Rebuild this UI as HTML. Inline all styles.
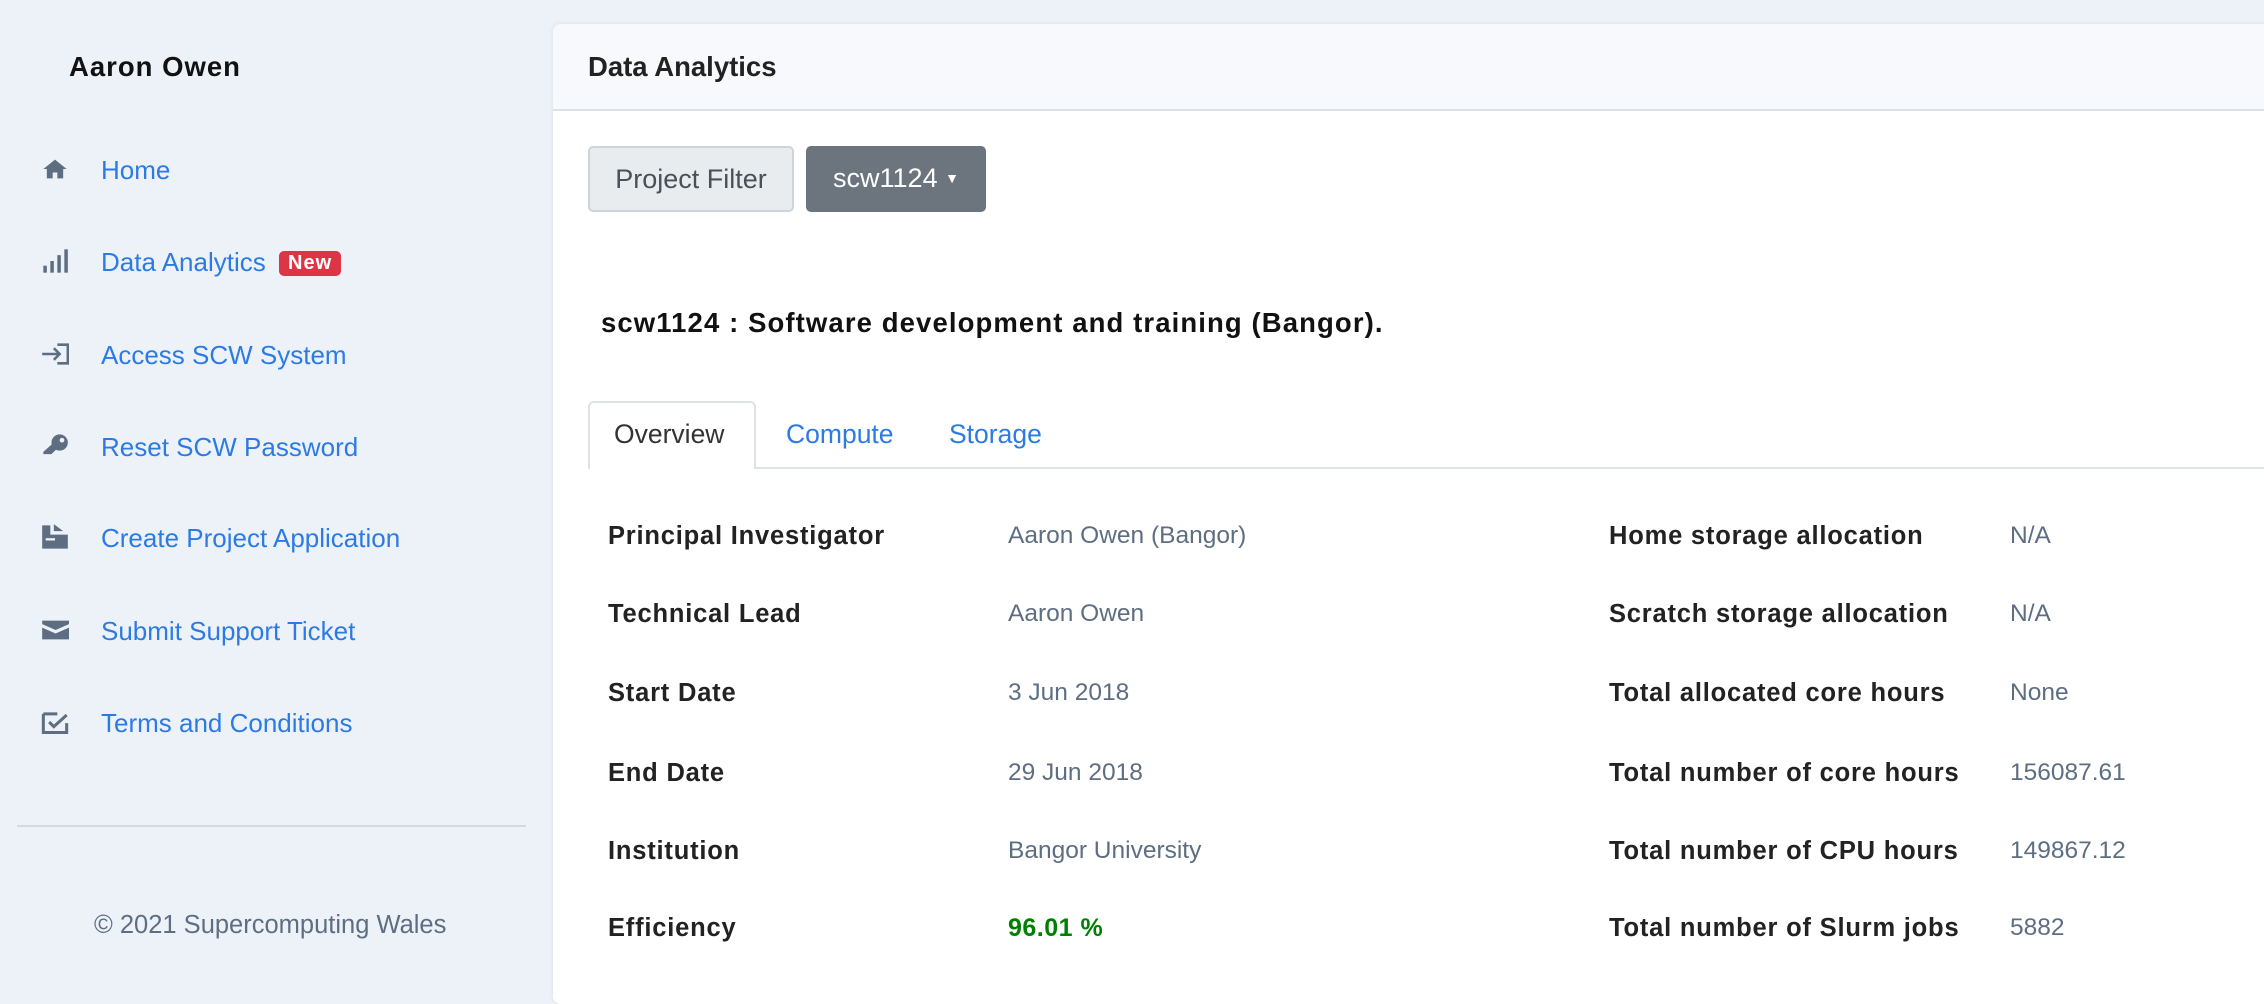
<!DOCTYPE html>
<html><head><meta charset="utf-8"><style>
*{box-sizing:border-box;margin:0;padding:0}
body{width:2264px;height:972px;overflow:hidden;background:#edf2f9;font-family:"Liberation Sans",sans-serif;position:relative}
.a{position:absolute;white-space:nowrap}
.nav{font-size:26px;color:#2c7be5;}
.ic{position:absolute;left:41px;width:28px;height:28px}
.card{position:absolute;left:553px;top:24px;width:1740px;height:980px;background:#fff;border-radius:8px;box-shadow:0 0 6px rgba(0,0,0,.08)}
.hd{position:absolute;left:0;top:0;right:0;height:87px;background:#f8f9fc;border-bottom:2px solid #dde2e8;border-radius:8px 8px 0 0}
.lbl{font-size:25.5px;font-weight:bold;color:#222;letter-spacing:.8px}
.val{font-size:24.5px;color:#5e6e82}
</style></head><body>
<div class="a" style="left:69px;top:51px;font-size:27.5px;font-weight:bold;color:#111;letter-spacing:1px">Aaron Owen</div>

<svg class="ic" style="top:155px" viewBox="0 0 24 24"><path d="M2 12L12 4l10 8h-3v8h-5v-5h-4v5H5v-8z" fill="#5e6e82"/></svg>
<div class="a nav" style="left:101px;top:155px">Home</div>
<svg class="ic" style="top:247px" viewBox="0 0 24 24" fill="#5e6e82"><rect x="2" y="16" width="3" height="6"/><rect x="8" y="12" width="3" height="10"/><rect x="14" y="7" width="3" height="15"/><rect x="20" y="2" width="3" height="20"/></svg>
<div class="a nav" style="left:101px;top:247px">Data Analytics</div>
<div class="a" style="left:279px;top:251px;background:#dc3545;color:#fff;font-size:20px;font-weight:bold;padding:1px 9px;border-radius:5px;letter-spacing:1px">New</div>
<svg class="ic" style="top:340px" viewBox="0 0 24 24" fill="none" stroke="#5e6e82" stroke-width="2.2"><path d="M1 12h15M11 7l5 5-5 5M14 4h9v16h-9"/></svg>
<div class="a nav" style="left:101px;top:340px">Access SCW System</div>
<svg class="ic" style="top:432px" viewBox="0 0 24 24" fill="#5e6e82"><circle cx="16" cy="9" r="7"/><path d="M2 22v-5l9-8 4 4-6 6H2z"/><circle cx="18" cy="7" r="2" fill="#edf2f9"/></svg>
<div class="a nav" style="left:101px;top:432px">Reset SCW Password</div>
<svg class="ic" style="top:523px" viewBox="0 0 24 24" fill="#5e6e82"><path d="M1 2h7v8h15v12H1z"/><path d="M11 1v6h8z"/><rect x="4" y="13" width="8" height="2" fill="#edf2f9"/></svg>
<div class="a nav" style="left:101px;top:523px">Create Project Application</div>
<svg class="ic" style="top:616px" viewBox="0 0 24 24" fill="#5e6e82"><path d="M1 4h23v3l-11.5 5L1 7z"/><path d="M1 10l11.5 5L24 10v10H1z"/></svg>
<div class="a nav" style="left:101px;top:616px">Submit Support Ticket</div>
<svg class="ic" style="top:708px" viewBox="0 0 24 24" fill="none" stroke="#5e6e82" stroke-width="2.6"><path d="M2 5v16h20v-8M2 5h12M7 12l4 4 11-10"/></svg>
<div class="a nav" style="left:101px;top:708px">Terms and Conditions</div>

<div class="a" style="left:17px;top:825px;width:509px;height:2px;background:#d5dae1"></div>
<div class="a" style="left:94px;top:911px;font-size:25.5px;color:#5e6e82">© 2021 Supercomputing Wales</div>

<div class="card">
<div class="hd"></div>
<div class="a" style="left:35px;top:27px;font-size:27.5px;font-weight:bold;color:#222">Data Analytics</div>
<div class="a" style="left:35px;top:122px;width:206px;height:66px;background:#e9ecef;border:2px solid #ced4da;border-radius:5px;font-size:27px;color:#495057;text-align:center;line-height:62px">Project Filter</div>
<div class="a" style="left:253px;top:122px;width:180px;height:66px;background:#6c757d;border-radius:5px;font-size:27px;color:#fff;text-align:center;line-height:64px">scw1124 <span style="font-size:14px;vertical-align:4px">▼</span></div>
<div class="a" style="left:48px;top:283px;font-size:27.5px;font-weight:bold;color:#111;letter-spacing:1.1px">scw1124 : Software development and training (Bangor).</div>
<div class="a" style="left:35px;top:443px;right:0;height:2px;background:#dee2e6"></div>
<div class="a" style="left:35px;top:377px;width:168px;height:68px;background:#fff;border:2px solid #dee2e6;border-bottom:none;border-radius:6px 6px 0 0"></div>
<div class="a" style="left:61px;top:395px;font-size:26.5px;color:#333">Overview</div>
<div class="a" style="left:233px;top:395px;font-size:26.5px;color:#2c7be5">Compute</div>
<div class="a" style="left:396px;top:395px;font-size:26.5px;color:#2c7be5">Storage</div>

<div class="a lbl" style="left:55px;top:498px">Principal Investigator</div>
<div class="a val" style="left:455px;top:498px">Aaron Owen (Bangor)</div>
<div class="a lbl" style="left:55px;top:576px">Technical Lead</div>
<div class="a val" style="left:455px;top:576px">Aaron Owen</div>
<div class="a lbl" style="left:55px;top:655px">Start Date</div>
<div class="a val" style="left:455px;top:655px">3 Jun 2018</div>
<div class="a lbl" style="left:55px;top:735px">End Date</div>
<div class="a val" style="left:455px;top:735px">29 Jun 2018</div>
<div class="a lbl" style="left:55px;top:813px">Institution</div>
<div class="a val" style="left:455px;top:813px">Bangor University</div>
<div class="a lbl" style="left:55px;top:890px">Efficiency</div>
<div class="a" style="left:455px;top:890px;font-size:25px;font-weight:bold;color:#008000;letter-spacing:.5px">96.01 %</div>

<div class="a lbl" style="left:1056px;top:498px">Home storage allocation</div>
<div class="a val" style="left:1457px;top:498px">N/A</div>
<div class="a lbl" style="left:1056px;top:576px">Scratch storage allocation</div>
<div class="a val" style="left:1457px;top:576px">N/A</div>
<div class="a lbl" style="left:1056px;top:655px">Total allocated core hours</div>
<div class="a val" style="left:1457px;top:655px">None</div>
<div class="a lbl" style="left:1056px;top:735px">Total number of core hours</div>
<div class="a val" style="left:1457px;top:735px">156087.61</div>
<div class="a lbl" style="left:1056px;top:813px">Total number of CPU hours</div>
<div class="a val" style="left:1457px;top:813px">149867.12</div>
<div class="a lbl" style="left:1056px;top:890px">Total number of Slurm jobs</div>
<div class="a val" style="left:1457px;top:890px">5882</div>
</div>
</body></html>
